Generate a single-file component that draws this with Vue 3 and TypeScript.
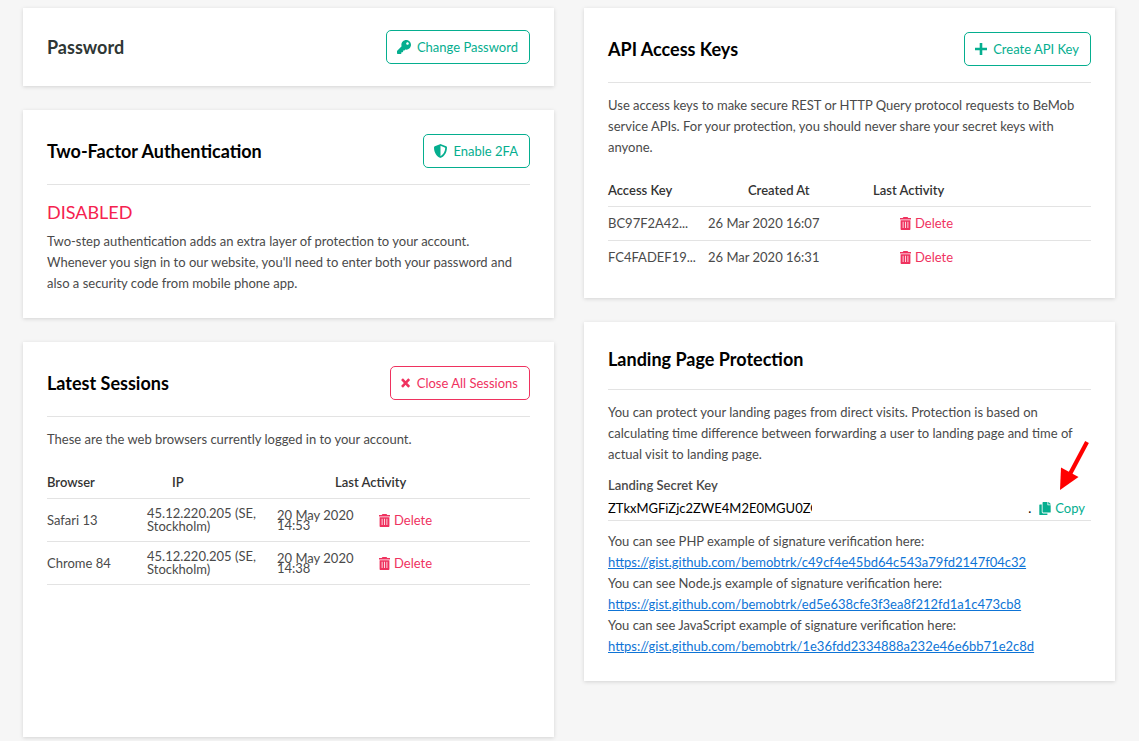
<script setup lang="ts">
import { ref } from 'vue'

interface Session {
  browser: string
  ip: string
  date: string
  time: string
}

interface ApiKey {
  key: string
  created: string
}

interface Example {
  language: string
  url: string
}

const sessions = ref<Session[]>([
  { browser: 'Safari 13', ip: '45.12.220.205 (SE, Stockholm)', date: '20 May 2020', time: '14:53' },
  { browser: 'Chrome 84', ip: '45.12.220.205 (SE, Stockholm)', date: '20 May 2020', time: '14:38' },
])

const apiKeys = ref<ApiKey[]>([
  { key: 'BC97F2A42...', created: '26 Mar 2020 16:07' },
  { key: 'FC4FADEF19...', created: '26 Mar 2020 16:31' },
])

const examples: Example[] = [
  { language: 'PHP', url: 'https://gist.github.com/bemobtrk/c49cf4e45bd64c543a79fd2147f04c32' },
  { language: 'Node.js', url: 'https://gist.github.com/bemobtrk/ed5e638cfe3f3ea8f212fd1a1c473cb8' },
  { language: 'JavaScript', url: 'https://gist.github.com/bemobtrk/1e36fdd2334888a232e46e6bb71e2c8d' },
]

const secretKey = ref('ZTkxMGFiZjc2ZWE4M2E0MGU0ZG')
</script>

<template>
  <main class="page">
    <div class="column">
      <section class="card card-compact">
        <header class="card-head">
          <h2 class="title title-soft">Password</h2>
          <button type="button" class="btn">
            <svg class="icon" viewBox="0 0 512 512" aria-hidden="true">
              <path d="M512 176.001C512 273.203 433.202 352 336 352c-11.22 0-22.19-1.062-32.827-3.069l-24.012 27.014A23.999 23.999 0 0 1 261.223 384H224v40c0 13.255-10.745 24-24 24h-40v40c0 13.255-10.745 24-24 24H24c-13.255 0-24-10.745-24-24v-78.059c0-6.365 2.529-12.47 7.029-16.971l161.802-161.802C163.108 213.814 160 195.271 160 176 160 78.798 238.797.001 335.999 0 433.488-.001 512 78.511 512 176.001zM336 128c0 26.51 21.49 48 48 48s48-21.49 48-48-21.49-48-48-48-48 21.49-48 48z" />
            </svg>
            Change Password
          </button>
        </header>
      </section>

      <section class="card">
        <header class="card-head ruled">
          <h2 class="title">Two-Factor Authentication</h2>
          <button type="button" class="btn">
            <svg class="icon icon-shield" viewBox="16 0 480 512" aria-hidden="true">
              <path d="M466.5 83.7l-192-80a48.15 48.15 0 0 0-36.9 0l-192 80C27.7 91.1 16 108.6 16 128c0 198.5 114.5 335.7 221.5 380.3 11.8 4.9 25.1 4.9 36.9 0C360.1 472.6 496 349.3 496 128c0-19.4-11.7-36.9-29.5-44.3zM256.1 446.3l-.1-381 175.9 73.3c-3.3 151.4-82.1 261.1-175.8 307.7z" />
            </svg>
            Enable 2FA
          </button>
        </header>
        <p class="status">DISABLED</p>
        <p>
          Two-step authentication adds an extra layer of protection to your account. Whenever you
          sign in to our website, you'll need to enter both your password and also a security code
          from mobile phone app.
        </p>
      </section>

      <section class="card card-tall">
        <header class="card-head ruled">
          <h2 class="title">Latest Sessions</h2>
          <button type="button" class="btn btn-danger">
            <svg class="icon icon-close" viewBox="0 0 10 10" aria-hidden="true">
              <path d="M1 1.200L8.200 8.800M8.200 1.200L1 8.800" fill="none" stroke="currentColor" stroke-width="2.600" />
            </svg>
            Close All Sessions
          </button>
        </header>
        <p class="intro">These are the web browsers currently logged in to your account.</p>
        <table class="table sessions">
          <colgroup>
            <col class="w-100" />
            <col class="w-130" />
            <col class="w-102" />
            <col />
          </colgroup>
          <thead>
            <tr>
              <th scope="col">Browser</th>
              <th scope="col" class="th-ip">IP</th>
              <th scope="col" class="th-activity" colspan="2">Last Activity</th>
            </tr>
          </thead>
          <tbody>
            <tr v-for="s in sessions" :key="s.time">
              <td>{{ s.browser }}</td>
              <td><div class="ip">{{ s.ip }}</div></td>
              <td><div class="stamp">{{ s.date }}<br />{{ s.time }}</div></td>
              <td>
                <button type="button" class="link-btn danger">
                  <svg class="trash" viewBox="0 0 11 13" aria-hidden="true">
                    <path fill-rule="evenodd" d="M3.500 0h4l.8 1H11v1.600H0V1h2.700zM.6 3.200h9.800V12c0 .6-.4 1-1 1H1.600c-.6 0-1-.4-1-1zM2.700 4.800v6.200h.8V4.800zM5.100 4.800v6.200h.8V4.800zM7.500 4.800v6.200h.8V4.800z" />
                  </svg>
                  Delete
                </button>
              </td>
            </tr>
          </tbody>
        </table>
      </section>
    </div>

    <div class="column">
      <section class="card">
        <header class="card-head ruled">
          <h2 class="title">API Access Keys</h2>
          <button type="button" class="btn">
            <svg class="icon icon-plus" viewBox="0 0 12 12" aria-hidden="true">
              <path d="M6 0v12M0 6h12" fill="none" stroke="currentColor" stroke-width="2.600" />
            </svg>
            Create API Key
          </button>
        </header>
        <p class="intro">
          Use access keys to make secure REST or HTTP Query protocol requests to BeMob service APIs.
          For your protection, you should never share your secret keys with anyone.
        </p>
        <table class="table keys">
          <colgroup>
            <col class="w-100" />
            <col class="w-160" />
            <col />
          </colgroup>
          <thead>
            <tr>
              <th scope="col">Access Key</th>
              <th scope="col" class="th-created">Created At</th>
              <th scope="col" class="th-last">Last Activity</th>
            </tr>
          </thead>
          <tbody>
            <tr v-for="k in apiKeys" :key="k.key">
              <td>{{ k.key }}</td>
              <td>{{ k.created }}</td>
              <td class="td-action">
                <button type="button" class="link-btn danger">
                  <svg class="trash" viewBox="0 0 11 13" aria-hidden="true">
                    <path fill-rule="evenodd" d="M3.500 0h4l.8 1H11v1.600H0V1h2.700zM.6 3.200h9.800V12c0 .6-.4 1-1 1H1.600c-.6 0-1-.4-1-1zM2.700 4.800v6.200h.8V4.800zM5.100 4.800v6.200h.8V4.800zM7.500 4.800v6.200h.8V4.800z" />
                  </svg>
                  Delete
                </button>
              </td>
            </tr>
          </tbody>
        </table>
      </section>

      <section class="card">
        <header class="card-head ruled">
          <h2 class="title">Landing Page Protection</h2>
        </header>
        <p class="intro">
          You can protect your landing pages from direct visits. Protection is based on calculating
          time difference between forwarding a user to landing page and time of actual visit to
          landing page.
        </p>
        <label class="field-label" for="secret">Landing Secret Key</label>
        <div class="field">
          <input id="secret" v-model="secretKey" class="secret" type="text" readonly />
          <span class="key-end">.</span>
          <button type="button" class="link-btn">
            <svg class="copy" viewBox="0 0 448 512" aria-hidden="true">
              <path d="M320 448v40c0 13.255-10.745 24-24 24H24c-13.255 0-24-10.745-24-24V120c0-13.255 10.745-24 24-24h72v296c0 30.879 25.121 56 56 56h168zm0-344V0H152c-13.255 0-24 10.745-24 24v368c0 13.255 10.745 24 24 24h272c13.255 0 24-10.745 24-24V128H344c-13.2 0-24-10.8-24-24zm120.971-31.029L375.029 7.029A24 24 0 0 0 358.059 0H352v96h96v-6.059a24 24 0 0 0-7.029-16.97z" />
            </svg>
            Copy
          </button>
          <svg class="pointer" viewBox="0 0 30 50" aria-hidden="true">
            <path d="M28 2L11 34" fill="none" stroke="#f00" stroke-width="4.200" />
            <path d="M1 50L2 27.500L19.500 37z" fill="#f00" />
          </svg>
        </div>
        <p v-for="e in examples" :key="e.url">
          You can see {{ e.language }} example of signature verification here:<br />
          <a :href="e.url">{{ e.url }}</a>
        </p>
      </section>
    </div>
  </main>
</template>

<style>
body {
  margin: 0;
  background: #f6f6f6;
}
</style>

<style scoped>
.page {
  display: grid;
  grid-template-columns: minmax(0, 1fr) minmax(0, 1fr);
  gap: 30px;
  align-items: start;
  padding: 8px 24px 4px 23px;
  color: #4a4a4a;
  font-family: Lato, "Liberation Sans", sans-serif;
  font-size: 13px;
  line-height: 21px;
}

.column {
  display: flex;
  flex-direction: column;
  gap: 24px;
}

.card {
  box-sizing: border-box;
  padding: 24px;
  background: #fff;
  box-shadow: 0 1px 4px rgba(0, 0, 0, 0.14);
}

.card-compact {
  padding: 22px 24px;
}

.card-tall {
  min-height: 395px;
}

.card-head {
  display: flex;
  align-items: center;
  justify-content: space-between;
}

.ruled {
  padding-bottom: 16px;
  border-bottom: 1px solid #e3e3e3;
}

.title {
  margin: 0;
  color: #000;
  font-size: 18px;
  font-weight: 700;
  line-height: 27px;
}

.title-soft {
  color: #2f3735;
}

p {
  margin: 0;
}

.intro {
  margin-top: 12px;
}

.status {
  margin: 14px 0 5px;
  color: #f5224f;
  font-size: 18px;
  line-height: 27px;
}

.btn {
  box-sizing: border-box;
  display: flex;
  align-items: center;
  gap: 6px;
  height: 34px;
  padding: 0 11px 0 10px;
  border: 1px solid #05ae8f;
  border-radius: 5px;
  background: #fff;
  color: #05ae8f;
  font: inherit;
}

.btn-danger {
  border-color: #ef325f;
  color: #ef325f;
}

.icon {
  width: 14px;
  height: 14px;
  fill: currentColor;
}

.icon-shield {
  width: 13px;
}

.icon-plus {
  width: 12px;
  height: 12px;
}

.icon-close {
  width: 10px;
  height: 10px;
}

.table {
  width: 100%;
  margin-top: 16px;
  border-collapse: separate;
  border-spacing: 0;
  table-layout: fixed;
}

.w-100 {
  width: 100px;
}

.w-102 {
  width: 102px;
}

.w-130 {
  width: 130px;
}

.w-160 {
  width: 160px;
}

th,
td {
  padding: 0;
  border-bottom: 1px solid #e3e3e3;
  text-align: left;
  white-space: nowrap;
}

th {
  height: 32px;
  color: #333;
  font-weight: 600;
}

.sessions td {
  height: 42px;
}

.keys td {
  height: 33px;
}

.keys tbody tr:last-child td {
  border-bottom: 0;
}

.th-ip {
  padding-left: 25px;
}

.th-activity {
  padding-left: 58px;
}

.th-created {
  padding-left: 40px;
}

.th-last {
  padding-left: 5px;
}

.td-action {
  padding-left: 32px;
}

.ip {
  line-height: 13px;
  white-space: normal;
}

.stamp {
  line-height: 10px;
}

.link-btn {
  display: flex;
  align-items: center;
  gap: 4px;
  padding: 0;
  border: 0;
  background: none;
  color: #05ae8f;
  font: inherit;
}

.danger {
  color: #ef325f;
}

.trash {
  width: 11px;
  height: 13px;
  fill: currentColor;
}

.copy {
  width: 12px;
  height: 13px;
  fill: currentColor;
}

.field-label {
  display: block;
  margin-top: 10px;
  font-weight: 600;
}

.field {
  position: relative;
  display: flex;
  align-items: center;
  height: 24px;
  margin-bottom: 10px;
  padding-right: 6px;
  border-bottom: 1px solid #e3e3e3;
}

.secret {
  width: 204px;
  height: 21px;
  padding: 0;
  border: 0;
  outline: 0;
  background: none;
  color: #000;
  font: inherit;
}

.key-end {
  margin-left: auto;
  padding-right: 8px;
  color: #000;
}

.pointer {
  position: absolute;
  right: 2px;
  bottom: 30px;
  width: 30px;
  height: 50px;
}

a {
  color: #0e74d6;
}
</style>
